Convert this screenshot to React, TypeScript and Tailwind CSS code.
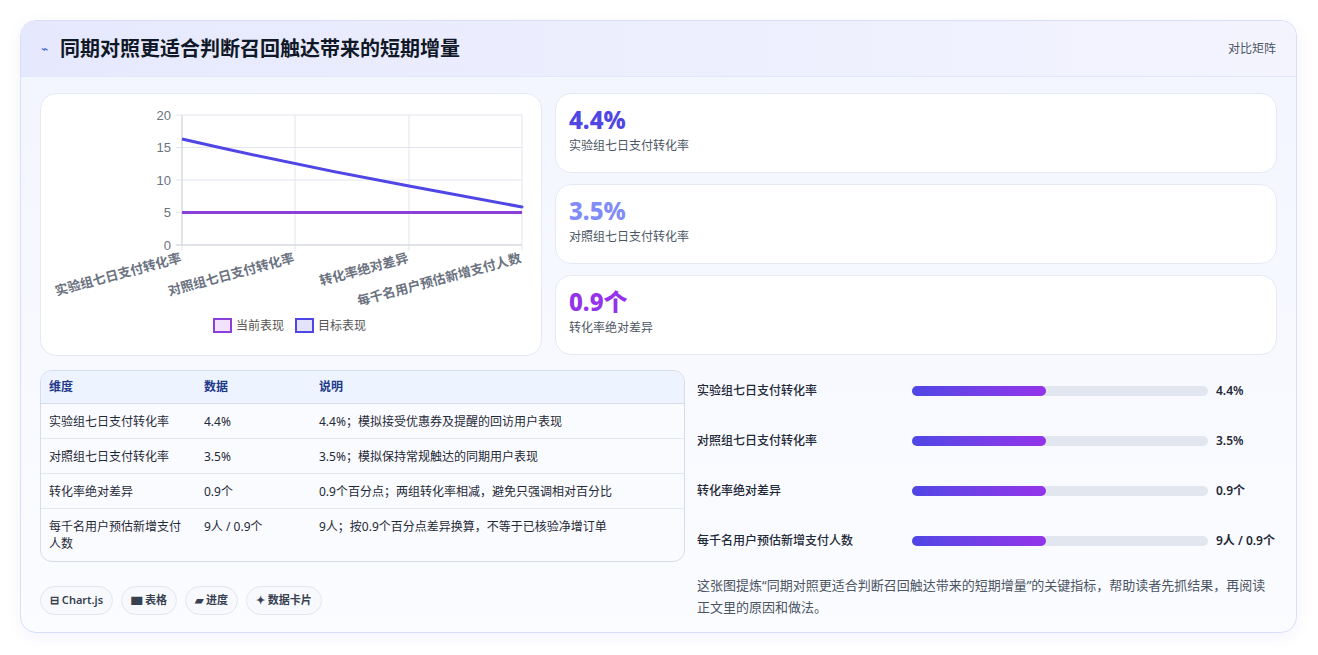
import React from "react";

const F = { fontFamily: '"Noto Sans", "Noto Sans CJK SC", sans-serif' };

const rows = [
  ["实验组七日支付转化率", "4.4%", "4.4%；模拟接受优惠券及提醒的回访用户表现"],
  ["对照组七日支付转化率", "3.5%", "3.5%；模拟保持常规触达的同期用户表现"],
  ["转化率绝对差异", "0.9个", "0.9个百分点；两组转化率相减，避免只强调相对百分比"],
  ["每千名用户预估新增支付人数", "9人 / 0.9个", "9人；按0.9个百分点差异换算，不等于已核验净增订单"],
];

function Chart() {
  const y = (v: number) => 245 - v * 6.5;
  const xs = [182, 295, 409, 522];
  const labels = ["实验组七日支付转化率", "对照组七日支付转化率", "转化率绝对差异", "每千名用户预估新增支付人数"];
  return (
    <svg width="501" height="262" viewBox="41 94 501 262" className="block">
      {[0, 5, 10, 15, 20].map((v) => (
        <g key={v}>
          <line x1={176} x2={522} y1={y(v)} y2={y(v)} stroke="#e2e5ee" strokeWidth="1" />
          <text x={171} y={y(v) + 4.5} textAnchor="end" fontSize="13" fill="#6b7280" fontFamily="Liberation Sans, sans-serif">{v}</text>
        </g>
      ))}
      {xs.map((x) => (
        <line key={x} x1={x} x2={x} y1={115} y2={251} stroke="#e2e5ee" />
      ))}
      <line x1={182} x2={182} y1={115} y2={245} stroke="#d1d5db" />
      <line x1={176} x2={522} y1={245} y2={245} stroke="#d1d5db" />
      <path d="M182 139 Q 295 165 409 186 T 522 207" fill="none" stroke="#4f46e5" strokeWidth="3" />
      <line x1={182} x2={522} y1={212.5} y2={212.5} stroke="#8b3fd9" strokeWidth="3" />
      {labels.map((l, i) => (
        <text key={i} x={xs[i]} y={262} textAnchor="end" fontSize="13" fontWeight="600" fill="#6b7280"
          transform={`rotate(-15 ${xs[i]} 262)`} style={F}>{l}</text>
      ))}
      <rect x={214} y={319} width={17} height={13} fill="#f3e2fb" stroke="#8b3fd9" strokeWidth="2" />
      <text x={236} y={330} fontSize="12" fill="#555" style={F}>当前表现</text>
      <rect x={296} y={319} width={17} height={13} fill="#e3e4fb" stroke="#4f46e5" strokeWidth="2" />
      <text x={318} y={330} fontSize="12" fill="#555" style={F}>目标表现</text>
    </svg>
  );
}

export default function App() {
  return (
    <div className="w-[1318px] h-[655px] bg-white pt-5 pl-5" style={F}>
      <div className="w-[1277px] h-[613px] rounded-2xl border border-[#d9defa] bg-gradient-to-b from-[#f3f5ff] to-[#fbfcff] overflow-hidden shadow-[0_4px_14px_rgba(99,102,241,0.08)]">
        <div className="h-[56px] flex items-center justify-between px-5 bg-gradient-to-r from-[#e6e9fd] to-[#f4f4ff] border-b border-[#e3e7fb]">
          <div className="flex items-center gap-3">
            <span className="text-[#3b5bdb] text-[12px]">⌁</span>
            <span className="text-[20px] font-bold text-[#111827]">同期对照更适合判断召回触达带来的短期增量</span>
          </div>
          <span className="text-[12px] text-[#4b5563]">对比矩阵</span>
        </div>
        <div className="px-[19px] pt-4 flex flex-col gap-4">
          <div className="flex gap-[13px]">
            <div className="w-[502px] h-[263px] rounded-2xl bg-white border border-[#e5e9f5] overflow-hidden">
              <Chart />
            </div>
            <div className="flex-1 flex flex-col gap-[11px]">
              {[
                ["4.4%", "实验组七日支付转化率", "text-[#4f46e5]"],
                ["3.5%", "对照组七日支付转化率", "text-[#818cf8]"],
                ["0.9个", "转化率绝对差异", "text-[#9333ea]"],
              ].map(([v, l, c]) => (
                <div key={l} className="h-[80px] rounded-2xl bg-white border border-[#e5e9f5] px-[13px] pt-[10px]">
                  <div className={`text-[24px] font-extrabold leading-[32px] ${c}`}>{v}</div>
                  <div className="text-[12px] text-[#4b5563] mt-[1px]">{l}</div>
                </div>
              ))}
            </div>
          </div>
          <div className="flex gap-3 -mt-[2px]">
            <div className="w-[645px] flex flex-col">
              <div className="rounded-xl border border-[#d6dcec] overflow-hidden bg-[#fafbfe] text-[12px]">
                <div className="flex h-[33px] items-center bg-[#eef4ff] border-b border-[#d6dcec] text-[#1e3a8a] font-semibold">
                  <div className="w-[154px] pl-2">维度</div>
                  <div className="w-[115px] pl-[9px]">数据</div>
                  <div className="flex-1 pl-[9px]">说明</div>
                </div>
                {rows.map((r, i) => (
                  <div key={i} className={`flex text-[#1f2937] py-[9px] ${i < 3 ? "border-b border-[#e3e7f0] h-[35px]" : ""}`}>
                    <div className="w-[154px] pl-2 pr-2 leading-[17px]">{r[0]}</div>
                    <div className="w-[115px] pl-[9px]">{r[1]}</div>
                    <div className="flex-1 pl-[9px]">{r[2]}</div>
                  </div>
                ))}
              </div>
              <div className="flex gap-2 mt-6 text-[11px] font-semibold text-[#374151]">
                {["⊟ Chart.js", "▆ 表格", "▰ 进度", "✦ 数据卡片"].map((t) => (
                  <span key={t} className="h-[29px] px-[9px] flex items-center rounded-full border border-[#e2e6ef] bg-[#f7f9fc]">{t}</span>
                ))}
              </div>
            </div>
            <div className="flex-1 flex flex-col -mt-[4px]">
              {rows.map((r, i) => (
                <div key={i} className="h-[50px] flex items-center text-[12px] font-medium text-[#1f2937]">
                  <div className="w-[215px]">{r[0]}</div>
                  <div className="w-[296px] h-[10px] rounded-full bg-[#e2e7ef]">
                    <div className="w-[134px] h-full rounded-full bg-gradient-to-r from-[#4f46e5] to-[#9333ea]" />
                  </div>
                  <div className="pl-2 font-semibold">{r[1]}</div>
                </div>
              ))}
              <p className="mt-[8px] text-[13px] leading-[22px] text-[#4b5563] pr-2">这张图提炼“同期对照更适合判断召回触达带来的短期增量”的关键指标，帮助读者先抓结果，再阅读正文里的原因和做法。</p>
            </div>
          </div>
        </div>
      </div>
    </div>
  );
}
